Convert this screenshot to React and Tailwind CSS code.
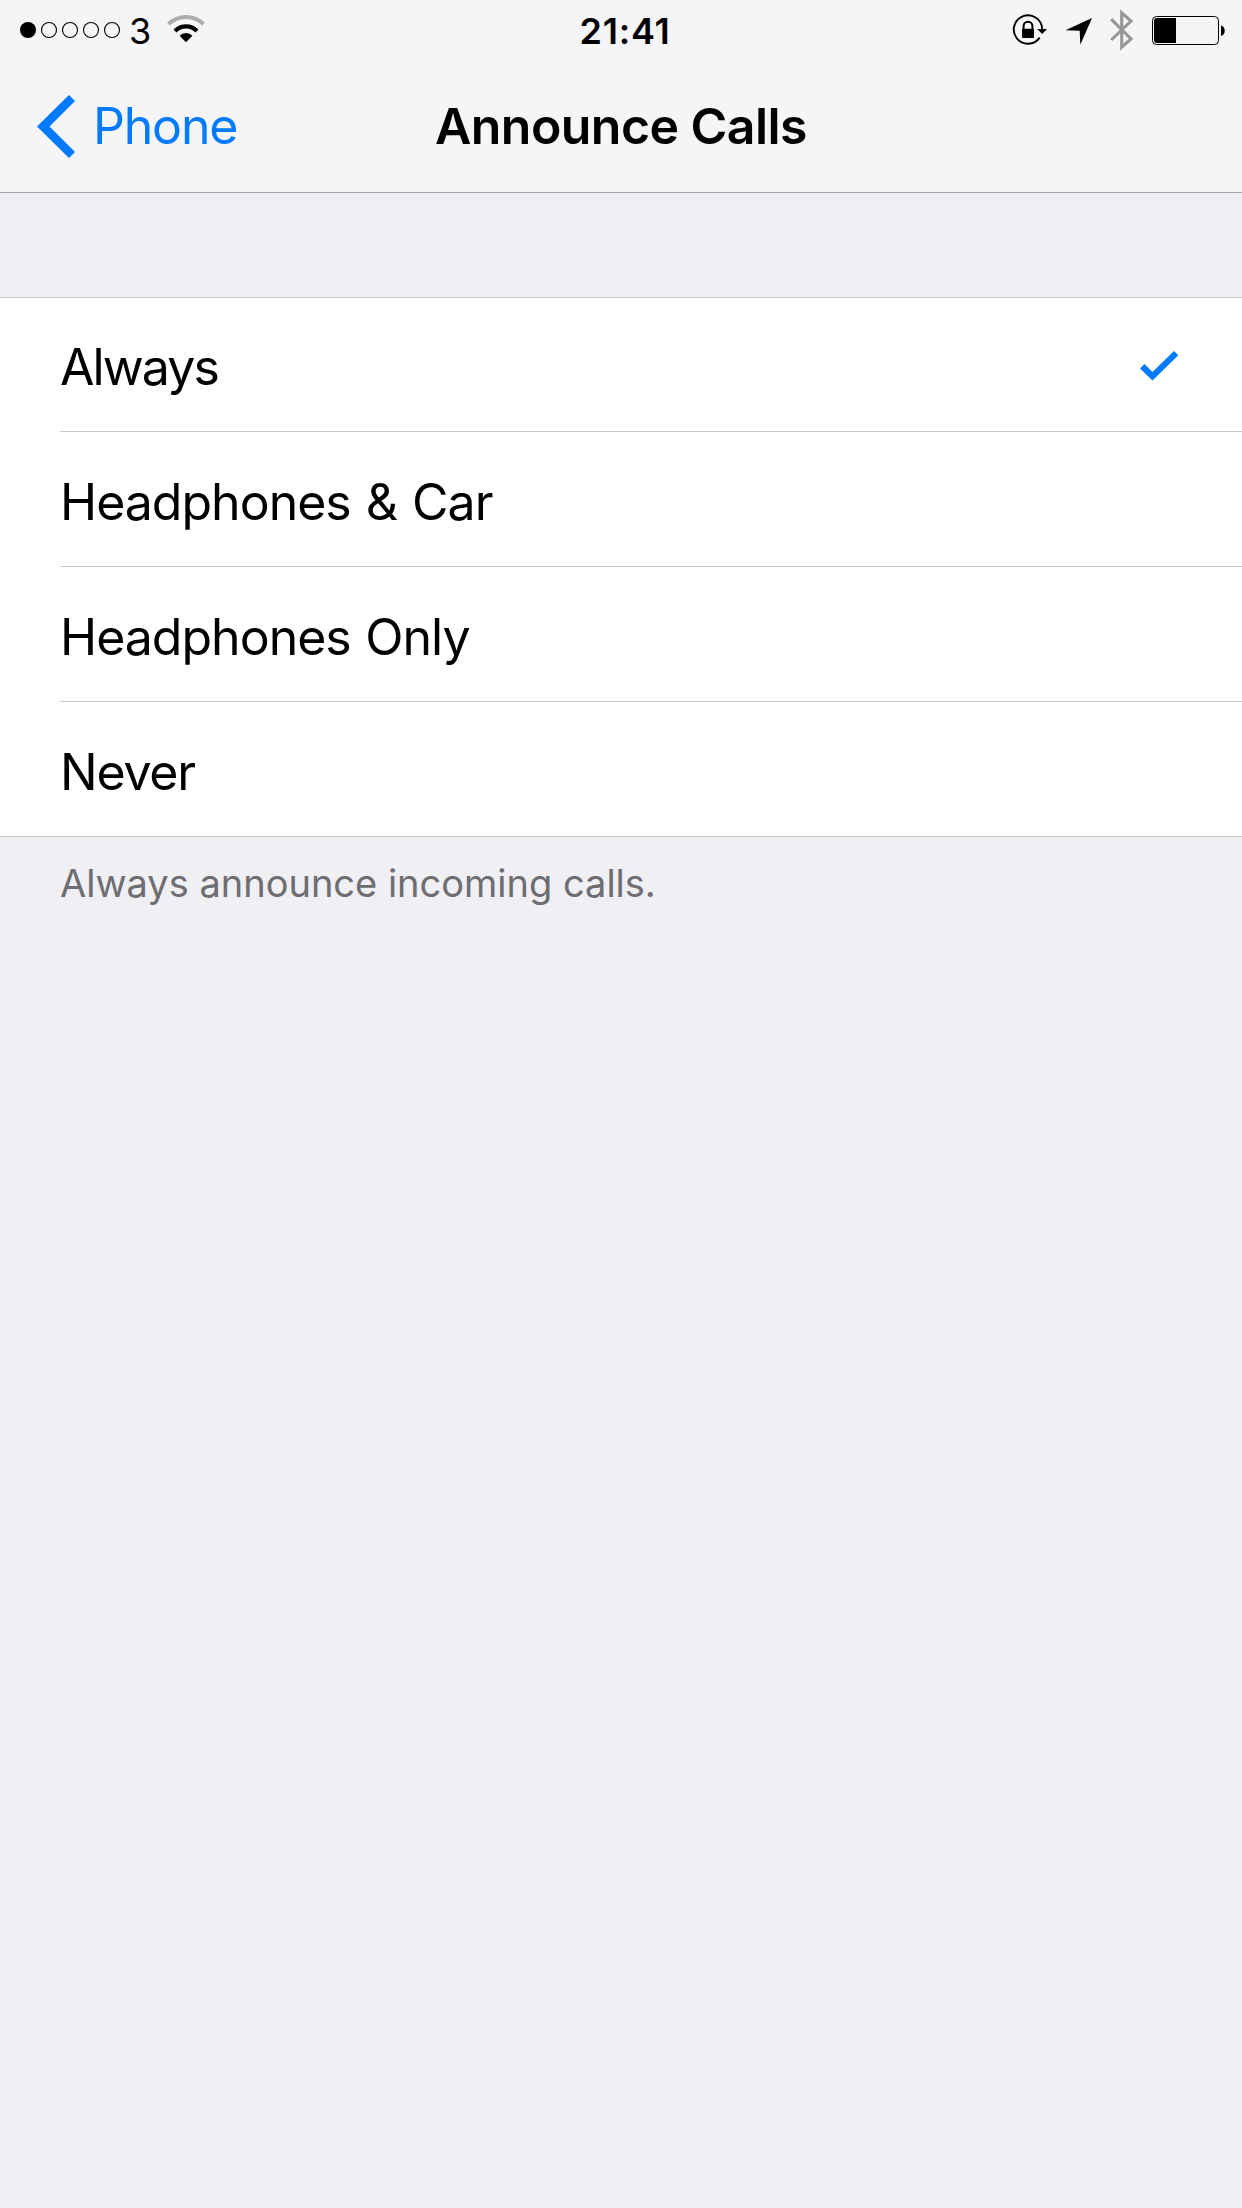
import { useState } from 'react';

const OPTIONS = [
  { id: 'always', label: 'Always', cls: 'tracking-[-1.9px]', note: 'Always announce incoming calls.' },
  { id: 'headphones-car', label: 'Headphones & Car', cls: 'tracking-[-1px] [word-spacing:2px]', note: 'Announce incoming calls when using headphones or a car.' },
  { id: 'headphones', label: 'Headphones Only', cls: 'tracking-[-1px] [word-spacing:1.5px]', note: 'Announce incoming calls when using headphones.' },
  { id: 'never', label: 'Never', cls: 'tracking-[-1.2px]', note: 'Never announce incoming calls.' },
];

function SignalDots() {
  return (
    <svg width="102" height="18" viewBox="0 0 102 18">
      <circle cx="9" cy="9" r="8" />
      {[30, 51, 72, 93].map((cx) => (
        <circle key={cx} cx={cx} cy="9" r="7.5" fill="none" stroke="#000" strokeWidth="1.1" />
      ))}
    </svg>
  );
}

function WifiIcon() {
  return (
    <svg width="38" height="28" viewBox="0 0 38 28" fill="none">
      <path d="M1.5 9.2a24.8 24.8 0 0 1 35 0" stroke="#acacad" strokeWidth="4" />
      <path d="M8 16a15.6 15.6 0 0 1 22 0" stroke="#000" strokeWidth="4.2" />
      <path d="M12.6 20.7a9 9 0 0 1 12.8 0L19 27.2z" fill="#000" />
    </svg>
  );
}

function RotationLockIcon() {
  return (
    <svg width="36" height="32" viewBox="0 0 36 32" fill="none">
      <path d="M27.7 23.6A14.2 14.2 0 1 1 30.2 15" stroke="#000" strokeWidth="1.9" />
      <path d="M25.2 15H35l-4.8 5z" fill="#000" />
      <path d="M11.6 15.500v-3.400a4.400 4.400 0 0 1 8.800 0V15.500" stroke="#000" strokeWidth="2" />
      <rect x="10" y="14.8" width="12" height="9.2" rx="0.8" fill="#000" />
    </svg>
  );
}

function LocationIcon() {
  return (
    <svg width="28" height="28" viewBox="0 0 28 28">
      <path d="M0.5 13.3 27 1 15.3 27.8 14.7 13.7z" />
    </svg>
  );
}

function BluetoothIcon() {
  return (
    <svg width="24" height="42" viewBox="0 0 24 42" fill="none" stroke="#979798" strokeWidth="3.1">
      <path d="M1.2 10.2 21 30l-9.3 8.2V3.8L21 12 1.2 31" />
    </svg>
  );
}

function BatteryIcon() {
  return (
    <svg width="74" height="30" viewBox="0 0 74 30">
      <rect x="0.5" y="0.5" width="66" height="28" rx="4" fill="none" stroke="#000" />
      <path d="M5 2h19v25H5a3 3 0 0 1-3-3V5a3 3 0 0 1 3-3z" />
      <path d="M69 9.5c5 1 5 9.5 0 10.5z" />
    </svg>
  );
}

function StatusBar() {
  return (
    <div className="grid h-[60px] grid-cols-[1fr_auto_1fr] items-center pl-[19px] pr-4">
      <div className="flex items-center">
        <SignalDots />
        <span className="ml-2 w-[22px] pt-0.5 text-[36px] leading-none">3</span>
        <span className="-mt-0.5 ml-4"><WifiIcon /></span>
      </div>
      <div className="pl-[5px] pt-0.5 text-[36px] font-semibold leading-none tracking-[0.8px]">21:41</div>
      <div className="flex items-center justify-end">
        <RotationLockIcon />
        <span className="ml-[17px] mt-0.5"><LocationIcon /></span>
        <span className="ml-[17px]"><BluetoothIcon /></span>
        <span className="ml-[18px] mt-0.5"><BatteryIcon /></span>
      </div>
    </div>
  );
}

function NavBar() {
  return (
    <div className="grid h-[132px] grid-cols-[1fr_auto_1fr] items-center px-[37px]">
      <button className="flex items-center text-[#007aff]">
        <svg width="38" height="64" viewBox="0 0 38 64" fill="currentColor">
          <path d="M0 32.500 32 1l6 6L12.500 32.500 38 58l-6 6z" />
        </svg>
        <span className="ml-[18px] text-[50px] leading-none tracking-[-1.2px]">Phone</span>
      </button>
      <h1 className="text-[50px] font-semibold leading-none tracking-[-0.55px]">Announce Calls</h1>
    </div>
  );
}

function OptionRow({ option, selected, onSelect }) {
  return (
    <li className="group pl-[60px]" onClick={onSelect}>
      <div className="flex h-[135px] items-center justify-between border-b border-[#c8c7cc] pr-16 pt-[5px] group-first:h-[134px] group-last:border-transparent">
        <span className={`text-[50px] leading-none ${option.cls}`}>{option.label}</span>
        {selected && (
          <svg width="38" height="30" viewBox="0 0 38 30" fill="#007aff" className="-mt-[3px]">
            <path d="M0 17.500 4.500 13l8 8L34 0l4.200 4.200L12.500 29.500z" />
          </svg>
        )}
      </div>
    </li>
  );
}

export default function App() {
  const [value, setValue] = useState('always');
  const current = OPTIONS.find((o) => o.id === value);

  return (
    <div className="min-h-[2208px] w-[1242px] bg-[#efeff4] font-['Inter','Liberation_Sans',sans-serif] text-black">
      <header className="border-b border-[#a7a7aa] bg-[#f5f5f7]">
        <StatusBar />
        <NavBar />
      </header>

      <main className="pt-[104px]">
        <ul className="border-t border-[#c8c7cc] bg-white">
          {OPTIONS.map((o) => (
            <OptionRow key={o.id} option={o} selected={o.id === value} onSelect={() => setValue(o.id)} />
          ))}
        </ul>
        <p className="-mt-px border-t border-[#c8c7cc] pl-[60px] pt-[23px] text-[38px] leading-[46px] text-[#6d6d72]">
          {current.note}
        </p>
      </main>
    </div>
  );
}
